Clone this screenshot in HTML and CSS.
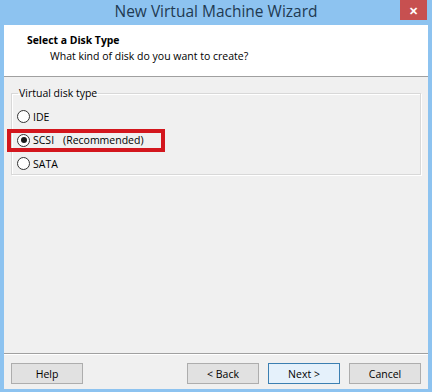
FILE: index.html
```html
<!DOCTYPE html>
<html lang="en">
<head>
  <meta charset="UTF-8" />
  <title>New Virtual Machine Wizard</title>
  <link rel="stylesheet" href="styles.css">
</head>
<body>

<div class="window">
  <!-- Title bar -->
  <div class="titlebar">
    <div class="title">New Virtual Machine Wizard</div>
    <div class="close">&#x2715;</div>
  </div>

  <div class="client">
    <!-- Page header -->
    <div class="header">
      <div class="heading">Select a Disk Type</div>
      <div class="subheading">What kind of disk do you want to create?</div>
    </div>

    <!-- Options -->
    <div class="content">
      <fieldset class="group">
        <legend>Virtual disk type</legend>
        <label class="option">
          <span class="radio"></span>
          <span>IDE</span>
        </label>
        <label class="option marked">
          <span class="radio checked"></span>
          <span>SCSI</span>
          <span class="note">(Recommended)</span>
        </label>
        <label class="option">
          <span class="radio"></span>
          <span>SATA</span>
        </label>
      </fieldset>
    </div>

    <!-- Buttons -->
    <div class="footer">
      <button class="btn">Help</button>
      <div class="spacer"></div>
      <button class="btn">&lt; Back</button>
      <button class="btn default">Next &gt;</button>
      <button class="btn">Cancel</button>
    </div>
  </div>
</div>

</body>
</html>
```

FILE: styles.css
```css
* { box-sizing: border-box; }
body {
  margin: 0;
  font-family: 'Open Sans', 'Noto Sans', sans-serif;
  font-size: 10.5px;
  color: #000;
}

.window {
  width: 432px;
  height: 392px;
  background-color: #8dc3f0;
  padding: 0 4px 3px 4px;
  display: flex;
  flex-direction: column;
}

.titlebar {
  height: 25px;
  position: relative;
  display: flex;
  justify-content: center;
  padding-top: 1px;
}

.title {
  font-size: 15.5px;
  color: #1f3a52;
  line-height: 20px;
}

.close {
  position: absolute;
  top: 0;
  right: 1px;
  width: 27px;
  height: 20px;
  background-color: #c75050;
  color: #fff;
  font-size: 11px;
  font-weight: bold;
  display: flex;
  align-items: center;
  justify-content: center;
}

.client {
  flex: 1;
  background-color: #f0f0f0;
  display: flex;
  flex-direction: column;
}

.header {
  height: 52px;
  background-color: #fff;
  border-bottom: 1px solid #a0a0a0;
  padding: 7px 0 0 23px;
}

.heading {
  font-weight: bold;
  font-size: 10.4px;
  line-height: 16px;
}

.subheading {
  padding-left: 23px;
  line-height: 16px;
}

.content {
  flex: 1;
  padding: 9px 7px 0 7px;
  border-bottom: 1px solid #a0a0a0;
}

.group {
  margin: 0;
  height: 89px;
  border: 1px solid #d8d8d8;
  box-shadow: inset 1px 1px #fff, 1px 1px #fff;
  padding: 8px 5px 3px 5px;
  display: flex;
  flex-direction: column;
  gap: 8.5px;
}

.group legend {
  padding: 0 1px;
  margin-left: 1px;
  line-height: 15px;
}

.option {
  display: flex;
  align-items: center;
  height: 17px;
  gap: 3px;
}

.option .note {
  margin-left: 6px;
}

.option.marked {
  height: 25px;
  width: 158px;
  margin: -4px 0 -4px -10px;
  border: 4px solid #d3161d;
  padding-left: 6px;
}

.radio {
  width: 13px;
  height: 13px;
  border-radius: 50%;
  border: 1px solid #333;
  background-color: #fff;
  display: flex;
  align-items: center;
  justify-content: center;
}

.radio.checked::after {
  content: "";
  width: 6px;
  height: 6px;
  border-radius: 50%;
  background-color: #1a1a1a;
}

.footer {
  height: 35px;
  border-top: 1px solid #fff;
  padding: 8px 7px 0 7px;
  display: flex;
  gap: 9px;
}

.spacer { flex: 1; }

.btn {
  width: 72px;
  height: 21px;
  font-family: inherit;
  font-size: 10.5px;
  color: #000;
  background-color: #e1e1e1;
  border: 1px solid #adadad;
  padding: 0;
}

.btn.default {
  border-color: #3c7fb1;
  background-color: #e5f1fb;
}
```
